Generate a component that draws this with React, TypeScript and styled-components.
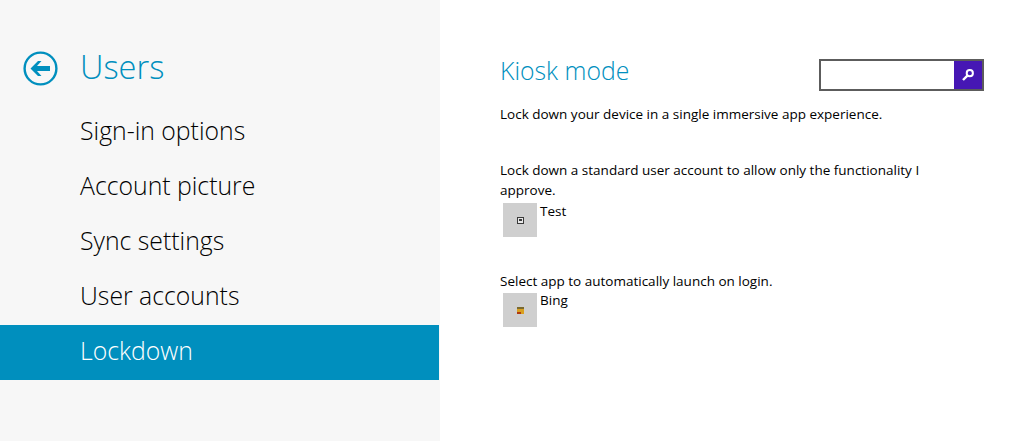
import React from 'react';
import styled, { createGlobalStyle } from 'styled-components';

const GlobalStyle = createGlobalStyle`
  html, body {
    margin: 0;
    padding: 0;
    background: #ffffff;
    font-family: "Open Sans", "Noto Sans", "Liberation Sans", sans-serif;
  }
`;

const Page = styled.div`
  display: flex;
  width: 1024px;
  height: 441px;
  overflow: hidden;
`;

const Sidebar = styled.aside`
  width: 440px;
  height: 100%;
  flex-shrink: 0;
  box-sizing: border-box;
  padding-top: 45px;
  background: #f7f7f7;
`;

const SidebarHeader = styled.div`
  display: flex;
  align-items: center;
  gap: 22px;
  height: 46px;
  padding-left: 23px;
  margin-bottom: 14px;
`;

const BackButton = styled.button`
  display: block;
  width: 35px;
  height: 35px;
  padding: 0;
  border: none;
  background: none;
`;

const SidebarTitle = styled.h1`
  margin: -2px 0 0;
  font-size: 32.6px;
  font-weight: 300;
  line-height: 46px;
  color: #008fbe;
`;

const NavItem = styled.div<{ $active?: boolean }>`
  width: 439px;
  height: 55px;
  box-sizing: border-box;
  padding-left: 80px;
  font-size: 24.8px;
  font-weight: 300;
  line-height: 51px;
  color: ${(p) => (p.$active ? '#ffffff' : '#000000')};
  background: ${(p) => (p.$active ? '#008fbe' : 'transparent')};
`;

const Content = styled.main`
  flex: 1;
  position: relative;
  box-sizing: border-box;
  padding: 53px 0 0 60px;
`;

const SearchBox = styled.div`
  position: absolute;
  top: 59px;
  left: 379px;
  display: flex;
  width: 165px;
  height: 32px;
  box-sizing: border-box;
  border: 2px solid #5c5c5c;
`;

const SearchInput = styled.div`
  flex: 1;
  background: #ffffff;
`;

const SearchButton = styled.div`
  display: flex;
  align-items: center;
  justify-content: center;
  width: 28px;
  background: #4617b4;
`;

const SectionTitle = styled.h2`
  margin: -1px 0 15px;
  font-size: 24.8px;
  font-weight: 300;
  line-height: 37px;
  color: #008fbe;
`;

const Paragraph = styled.p<{ $gap?: number }>`
  width: 440px;
  margin: 0 0 ${(p) => p.$gap ?? 0}px;
  font-size: 13.5px;
  line-height: 20px;
  color: #000000;
`;

const Row = styled.div<{ $gap: number }>`
  display: flex;
  align-items: flex-start;
  margin: -1px 0 ${(p) => p.$gap}px 3px;
`;

const Tile = styled.div<{ $top: number }>`
  display: flex;
  align-items: center;
  justify-content: center;
  width: 34px;
  height: 34px;
  margin: ${(p) => p.$top}px 3px 0 0;
  background: #cfcfcf;
`;

const RowLabel = styled.span<{ $offset: number }>`
  margin-top: ${(p) => p.$offset}px;
  font-size: 13.5px;
  line-height: 20px;
  color: #000000;
`;

const BackIcon = () => (
  <svg width="35" height="35" viewBox="0 0 35 35">
    <circle cx="17.5" cy="17.5" r="15.9" fill="none" stroke="#008fbe" strokeWidth="2.4" />
    <path d="M7.5 17.5 L15 10 H18.5 L14 15 H27 V20 H14 L18.5 25 H15 Z" fill="#008fbe" />
  </svg>
);

const SearchIcon = () => (
  <svg width="14" height="14" viewBox="0 0 14 14">
    <circle cx="8.8" cy="5.2" r="3.1" fill="none" stroke="#ffffff" strokeWidth="2" />
    <path d="M6.4 7.6 L2 12" stroke="#ffffff" strokeWidth="2.4" />
  </svg>
);

const UserGlyph = () => (
  <svg width="7" height="7" viewBox="0 0 7 7">
    <rect x="0.5" y="0.5" width="6" height="6" fill="#e8e8e8" stroke="#3a3a3a" />
    <rect x="2" y="2" width="3" height="2" fill="#3a3a3a" />
  </svg>
);

const BingGlyph = () => (
  <svg width="7" height="7" viewBox="0 0 7 7">
    <rect width="7" height="7" fill="#d9a020" />
    <rect width="7" height="2" fill="#7a6a30" />
    <rect y="5" width="4" height="2" fill="#b03a10" />
  </svg>
);

const navItems = ['Sign-in options', 'Account picture', 'Sync settings', 'User accounts', 'Lockdown'];

const App = () => {
  return (
    <Page>
      <GlobalStyle />
      <Sidebar>
        <SidebarHeader>
          <BackButton>
            <BackIcon />
          </BackButton>
          <SidebarTitle>Users</SidebarTitle>
        </SidebarHeader>
        {navItems.map((item) => (
          <NavItem key={item} $active={item === 'Lockdown'}>
            {item}
          </NavItem>
        ))}
      </Sidebar>
      <Content>
        <SearchBox>
          <SearchInput />
          <SearchButton>
            <SearchIcon />
          </SearchButton>
        </SearchBox>
        <SectionTitle>Kiosk mode</SectionTitle>
        <Paragraph $gap={36}>Lock down your device in a single immersive app experience.</Paragraph>
        <Paragraph>Lock down a standard user account to allow only the functionality I approve.</Paragraph>
        <Row $gap={34}>
          <Tile $top={4}>
            <UserGlyph />
          </Tile>
          <RowLabel $offset={2}>Test</RowLabel>
        </Row>
        <Paragraph>Select app to automatically launch on login.</Paragraph>
        <Row $gap={0}>
          <Tile $top={3}>
            <BingGlyph />
          </Tile>
          <RowLabel $offset={0}>Bing</RowLabel>
        </Row>
      </Content>
    </Page>
  );
};

export default App;
